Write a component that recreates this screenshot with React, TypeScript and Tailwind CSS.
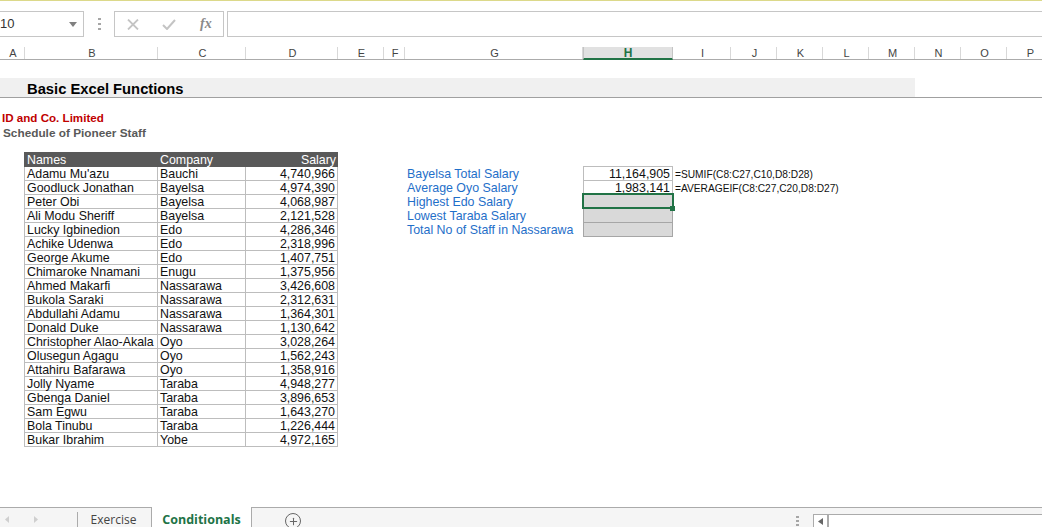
import { Plus } from "lucide-react";

const columns = [
  { l: "A", w: 25 }, { l: "B", w: 133 }, { l: "C", w: 88 }, { l: "D", w: 92 }, { l: "E", w: 46 }, { l: "F", w: 21 },
  { l: "G", w: 178 }, { l: "H", w: 90 }, { l: "I", w: 58 }, { l: "J", w: 46 }, { l: "K", w: 46 }, { l: "L", w: 46 },
  { l: "M", w: 46 }, { l: "N", w: 46 }, { l: "O", w: 46 }, { l: "P", w: 46 },
];

const staff: [string, string, string][] = [
  ["Adamu Mu'azu", "Bauchi", "4,740,966"],
  ["Goodluck Jonathan", "Bayelsa", "4,974,390"],
  ["Peter Obi", "Bayelsa", "4,068,987"],
  ["Ali Modu Sheriff", "Bayelsa", "2,121,528"],
  ["Lucky Igbinedion", "Edo", "4,286,346"],
  ["Achike Udenwa", "Edo", "2,318,996"],
  ["George Akume", "Edo", "1,407,751"],
  ["Chimaroke Nnamani", "Enugu", "1,375,956"],
  ["Ahmed Makarfi", "Nassarawa", "3,426,608"],
  ["Bukola Saraki", "Nassarawa", "2,312,631"],
  ["Abdullahi Adamu", "Nassarawa", "1,364,301"],
  ["Donald Duke", "Nassarawa", "1,130,642"],
  ["Christopher Alao-Akala", "Oyo", "3,028,264"],
  ["Olusegun Agagu", "Oyo", "1,562,243"],
  ["Attahiru Bafarawa", "Oyo", "1,358,916"],
  ["Jolly Nyame", "Taraba", "4,948,277"],
  ["Gbenga Daniel", "Taraba", "3,896,653"],
  ["Sam Egwu", "Taraba", "1,643,270"],
  ["Bola Tinubu", "Taraba", "1,226,444"],
  ["Bukar Ibrahim", "Yobe", "4,972,165"],
];

const labels = [
  "Bayelsa Total Salary",
  "Average Oyo Salary",
  "Highest Edo Salary",
  "Lowest Taraba Salary",
  "Total No of Staff in Nassarawa",
];

function FormulaBar() {
  return (
    <div className="flex h-[26px] mt-[10px] items-stretch">
      <div className="w-[84px] border-y border-r border-[#c6c6c6] flex items-center justify-between pr-[6px] text-[13px] text-[#333]">
        <span>10</span>
        <svg width="8" height="5" viewBox="0 0 8 5"><path d="M0 0h8L4 5z" fill="#808080" /></svg>
      </div>
      <div className="w-[30px] flex flex-col items-center justify-center gap-[3px]">
        <span className="w-[3px] h-[2px] bg-[#a6a6a6]" />
        <span className="w-[3px] h-[2px] bg-[#a6a6a6]" />
        <span className="w-[3px] h-[2px] bg-[#a6a6a6]" />
      </div>
      <div className="w-[110px] border border-[#c6c6c6] flex items-center">
        <svg className="ml-[12px]" width="12" height="11" viewBox="0 0 12 11"><path d="M1 0.5l10 10M11 0.5l-10 10" stroke="#c4c4c4" strokeWidth="1.8" fill="none" /></svg>
        <svg className="ml-[23px]" width="14" height="11" viewBox="0 0 14 11"><path d="M1 6l4 4 8-9" stroke="#c4c4c4" strokeWidth="2" fill="none" /></svg>
        <span className="ml-[24px] font-['Liberation_Serif'] italic font-bold text-[14px] leading-none text-[#8a8a8a]">fx</span>
      </div>
      <div className="ml-[3px] flex-1 border-y border-l border-[#c6c6c6]" />
    </div>
  );
}

function ColumnHeaders() {
  return (
    <div className="flex h-[13px] mt-[10px] border-b border-[#ababab]">
      {columns.map((c) =>
        c.l === "H" ? (
          <div key={c.l} className="shrink-0 bg-[#e1e1e1] border-x border-[#c4c4c4] border-b-2 border-b-[#217346] flex items-center justify-center text-[12px] font-bold text-[#217346] leading-none h-[13px]" style={{ width: c.w }}>
            {c.l}
          </div>
        ) : (
          <div key={c.l} className="shrink-0 flex items-center justify-center pl-[2px] text-[11px] text-[#444] leading-none h-[12px] border-r border-[#d8d8d8]" style={{ width: c.w }}>
            {c.l}
          </div>
        )
      )}
    </div>
  );
}

function StaffTable() {
  return (
    <div className="w-[314px] ml-[24px] shrink-0 border-l border-[#bdbdbd]">
      <div className="grid grid-cols-[133px_88px_92px] grid-rows-[15px] h-[15px] bg-[#595959] text-white leading-[16px] -ml-px pl-px">
        <div className="pl-[2px]">Names</div>
        <div className="pl-[2px]">Company</div>
        <div className="text-right pr-[2px]">Salary</div>
      </div>
      {staff.map(([n, c, s]) => (
        <div key={n} className="grid grid-cols-[133px_88px_92px] grid-rows-[13px] h-[14px] leading-[15px] text-[#111] border-b border-[#bdbdbd]">
          <div className="pl-[2px] border-r border-[#bdbdbd] whitespace-nowrap">{n}</div>
          <div className="pl-[2px] border-r border-[#bdbdbd]">{c}</div>
          <div className="text-right pr-[2px] border-r border-[#bdbdbd]">{s}</div>
        </div>
      ))}
    </div>
  );
}

function Summary() {
  return (
    <div className="flex ml-[69px] mt-[14px] h-[71px]">
      <div className="w-[176px] text-[#1f6fc9]">
        {labels.map((l) => (
          <div key={l} className="h-[14px] leading-[16px] whitespace-nowrap">{l}</div>
        ))}
      </div>
      <div className="w-[90px]">
        <div className="h-[15px] border border-[#bdbdbd] text-right pr-[2px] leading-[15px] text-[#111]">11,164,905</div>
        <div className="h-[14px] border-x border-[#bdbdbd] text-right pr-[2px] leading-[15px] text-[#111]">1,983,141</div>
        <div className="relative h-[14px] bg-[#d9d9d9]">
          <div className="absolute -top-[2px] -left-px -right-px bottom-0 border-2 border-[#217346]">
            <span className="absolute -right-[3px] -bottom-[4px] w-[5px] h-[5px] bg-[#217346]" />
          </div>
        </div>
        <div className="h-[14px] bg-[#d9d9d9] border-x border-b border-[#a6a6a6]" />
        <div className="h-[14px] bg-[#d9d9d9] border-x border-b border-[#a6a6a6]" />
      </div>
      <div className="ml-[2px] text-[10.2px] text-[#111] whitespace-nowrap">
        <div className="h-[14px] leading-[17px]">=SUMIF(C8:C27,C10,D8:D28)</div>
        <div className="h-[14px] leading-[17px]">=AVERAGEIF(C8:C27,C20,D8:D27)</div>
      </div>
    </div>
  );
}

function BottomBar() {
  return (
    <div className="h-[20px] border-t border-[#ababab] bg-[#f5f5f5] flex font-['Open_Sans'] text-[12px] leading-[26px]">
      <div className="w-[78px] flex items-center pl-[5px] gap-[25px] border-r border-[#ababab] mt-[4px]">
        <svg width="4" height="7" viewBox="0 0 4 7"><path d="M4 0v7L0 3.5z" fill="#cfcfcf" /></svg>
        <svg width="4" height="7" viewBox="0 0 4 7"><path d="M0 0v7l4-3.5z" fill="#cfcfcf" /></svg>
      </div>
      <div className="w-[73px] -mt-px text-center text-[#444] pr-[2px]">Exercise</div>
      <div className="w-[101px] -mt-px bg-white border-x border-[#ababab] text-center font-bold text-[12.5px] text-[#217346]">Conditionals</div>
      <div className="ml-[33px] w-[16px] h-[16px] mt-[5px] rounded-full border border-[#666] flex items-center justify-center">
        <Plus size={11} strokeWidth={2.2} className="text-[#666]" />
      </div>
      <div className="ml-[495px] w-[3px] mt-[8px] flex flex-col gap-[2px]">
        <span className="h-[2px] bg-[#a6a6a6]" />
        <span className="h-[2px] bg-[#a6a6a6]" />
        <span className="h-[2px] bg-[#a6a6a6]" />
      </div>
      <div className="ml-[14px] mt-[6px] flex-1 flex bg-white border-t border-l border-[#ababab]">
        <div className="w-[15px] border-r-2 border-[#ababab] flex items-center justify-center">
          <svg width="5" height="7" viewBox="0 0 5 7"><path d="M5 0v7L0 3.5z" fill="#666" /></svg>
        </div>
      </div>
    </div>
  );
}

export default function App() {
  return (
    <div className="w-[1042px] h-[527px] overflow-hidden bg-white flex flex-col font-['Liberation_Sans',sans-serif] text-[12.4px]">
      <div className="h-px bg-[#dcd98a] shrink-0" />
      <FormulaBar />
      <ColumnHeaders />
      <div className="flex-1 min-h-0">
        <div className="mt-[18px] border-b border-[#a0a0a0]">
          <div className="w-[915px] h-[19px] bg-[#f0f0f0] pl-[27px] text-[14.75px] font-bold leading-[23px] text-black">Basic Excel Functions</div>
        </div>
        <div className="mt-[13px] pl-[2px] h-[14px] leading-[14px] font-bold text-[#c00000] text-[11.6px]">ID and Co. Limited</div>
        <div className="pl-[3px] h-[14px] leading-[16px] font-bold text-[#595959] text-[11.8px]">Schedule of Pioneer Staff</div>
        <div className="flex mt-[13px]">
          <StaffTable />
          <Summary />
        </div>
      </div>
      <BottomBar />
    </div>
  );
}
